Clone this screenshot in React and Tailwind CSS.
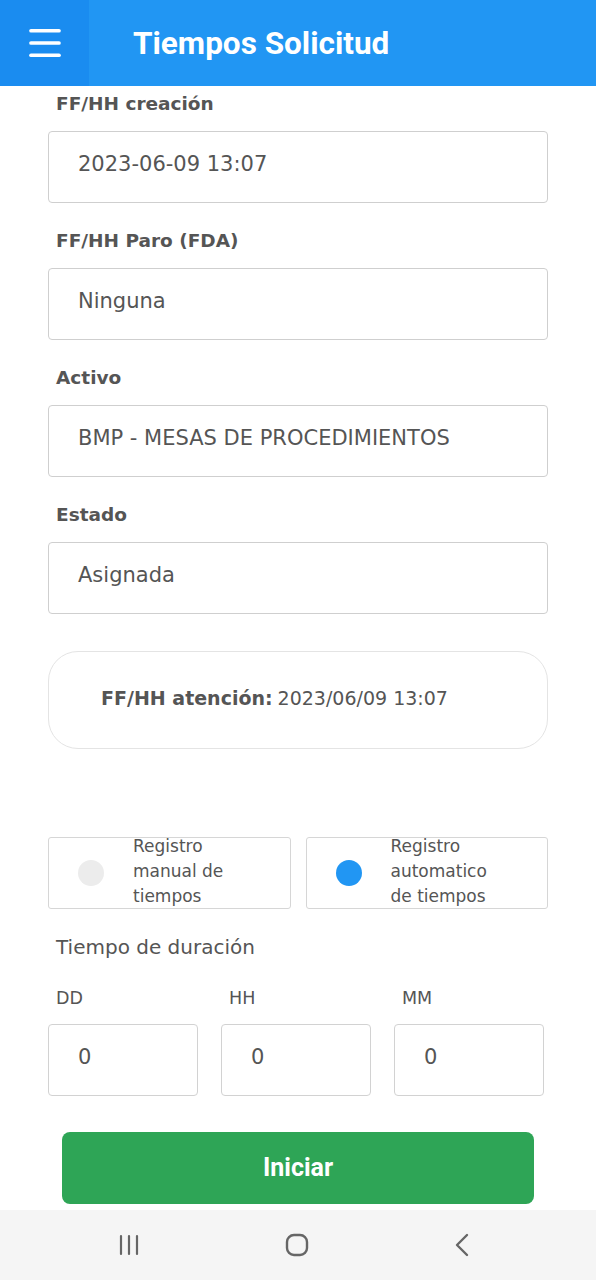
import { Menu } from "lucide-react";

function Field({ label, value }) {
  return (
    <div className="flex flex-col">
      <p className="h-[44px] pt-[3px] pl-2 text-[18.5px] font-bold text-[#555]">{label}</p>
      <div className="flex items-center h-[72px] border border-[#cfcfcf] rounded-[4px] pl-[29px] pb-[5px] text-[21px] text-[#555]">
        {value}
      </div>
    </div>
  );
}

function Radio({ checked, lines }) {
  return (
    <div className="flex items-center h-[72px] border border-[#d6d6d6] rounded-[3px]">
      <div className="w-[84px] flex justify-center">
        <span
          className={`block w-[26px] h-[26px] rounded-full ${
            checked ? "bg-[#2196F3]" : "bg-[#ececec]"
          }`}
        ></span>
      </div>
      <p className="text-[17px] leading-[25px] text-[#555] pb-[3px]">
        {lines.map((l) => (
          <span key={l} className="block">
            {l}
          </span>
        ))}
      </p>
    </div>
  );
}

function Small({ label }) {
  return (
    <div className="flex flex-col">
      <p className="h-[40px] pl-2 pt-[1px] text-[17.5px] text-[#555]">{label}</p>
      <div className="flex items-center h-[72px] border border-[#d2d2d2] rounded-[4px] pl-[29px] pb-[5px] text-[21px] text-[#555]">
        0
      </div>
    </div>
  );
}

export default function App() {
  return (
    <div className="w-[596px] h-[1280px] bg-white flex flex-col font-['DejaVu_Sans',sans-serif]">
      <div className="flex h-[86px] bg-[#2196F3]">
        <div className="w-[89px] bg-[#1a8cf0] flex items-center justify-center text-white">
          <Menu size={42} strokeWidth={2.1} />
        </div>
        <p className="pl-[44px] pt-[2px] flex items-center text-[31.5px] font-bold text-white font-['Roboto',sans-serif]">
          Tiempos Solicitud
        </p>
      </div>

      <div className="flex flex-col gap-[21px] px-[48px] pt-[1px]">
        <Field label="FF/HH creación" value="2023-06-09 13:07" />
        <Field label="FF/HH Paro (FDA)" value="Ninguna" />
        <Field label="Activo" value="BMP - MESAS DE PROCEDIMIENTOS" />
        <Field label="Estado" value="Asignada" />
      </div>

      <div className="mx-[48px] mt-[37px] h-[98px] border border-[#e4e4e4] rounded-[30px] flex items-center pl-[52px] pb-[4px] text-[19px] text-[#555]">
        <span className="font-bold">FF/HH atención:</span>
        <span className="ml-[5px]">2023/06/09 13:07</span>
      </div>

      <div className="grid grid-cols-2 gap-[15px] mx-[48px] mt-[88px]">
        <Radio checked={false} lines={["Registro", "manual de", "tiempos"]} />
        <Radio checked lines={["Registro", "automatico", "de tiempos"]} />
      </div>

      <p className="pl-[56px] mt-[23px] text-[20px] text-[#555]">Tiempo de duración</p>

      <div className="grid grid-cols-3 gap-[23px] mx-[48px] mt-[22px] w-[496px]">
        <Small label="DD" />
        <Small label="HH" />
        <Small label="MM" />
      </div>

      <div className="mx-[62px] mt-[36px] h-[72px] bg-[#2EA556] rounded-[8px] flex items-center justify-center text-white text-[25px] font-bold font-['Roboto',sans-serif]">
        Iniciar
      </div>

      <div className="mt-auto h-[70px] bg-[#f5f5f5] flex items-center justify-between pl-[117px] pr-[124px] text-[#666]">
        <svg width="24" height="24" viewBox="0 0 24 24" fill="none" stroke="currentColor" strokeWidth="2.2" strokeLinecap="round">
          <path d="M4 3v18M12 3v18M20 3v18" />
        </svg>
        <svg width="26" height="26" viewBox="0 0 26 26" fill="none" stroke="currentColor" strokeWidth="2.4">
          <rect x="3" y="3" width="20" height="20" rx="7" />
        </svg>
        <svg width="20" height="24" viewBox="0 0 20 24" fill="none" stroke="currentColor" strokeWidth="2.4" strokeLinecap="round" strokeLinejoin="round">
          <path d="M15 2L5 12l10 10" />
        </svg>
      </div>
    </div>
  );
}
